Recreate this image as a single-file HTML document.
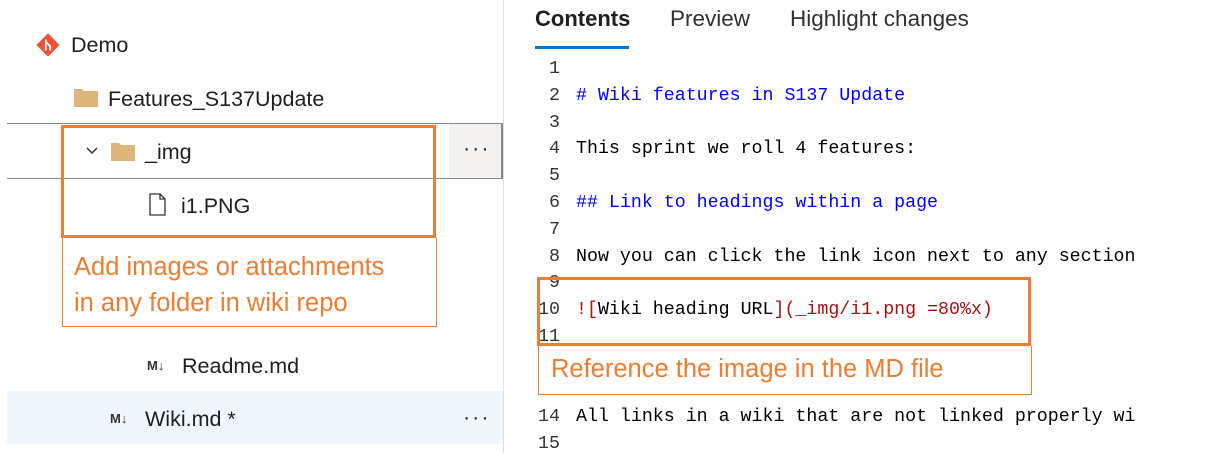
<!DOCTYPE html>
<html><head><meta charset="utf-8"><style>
body{margin:0;width:1228px;height:453px;background:#fff;position:relative;overflow:hidden;font-family:"Liberation Sans",sans-serif;color:#201f1e}
.a{position:absolute;white-space:nowrap}
.t{font-size:21.5px}
.ln{position:absolute;width:60px;text-align:right;left:500px;color:#333;font-family:"Liberation Mono",monospace;font-size:18.3px}
.cl{position:absolute;left:576px;font-family:"Liberation Mono",monospace;font-size:18.3px;white-space:nowrap;color:#000}
.or{color:#ED7D31}
.md{font-size:13px;font-weight:bold;color:#333}
</style></head><body>
<div class="a" style="left:503px;top:0;width:1px;height:453px;background:#e1dfdd"></div>
<svg class="a" style="left:36px;top:33px" width="24" height="24" viewBox="0 0 22 22"><rect x="3.5" y="3.5" width="15" height="15" transform="rotate(45 11 11)" fill="#f05033"/><path d="M9 6v10M9 8l4 4v4" stroke="#fff" stroke-width="1.6" fill="none"/></svg>
<div class="a t" style="left:71px;top:33px">Demo</div>
<svg class="a" style="left:74px;top:87px" width="24" height="20"><path d="M0 2h8l2 2h14v16H0z" fill="#dcb67a"/></svg>
<div class="a t" style="left:108px;top:87px">Features_S137Update</div>
<div class="a" style="left:7px;top:123px;width:494px;height:54px;border-top:1px solid #8a8886;border-bottom:1px solid #8a8886;border-right:2px solid #8a8886"></div>
<div class="a" style="left:449px;top:124px;width:52px;height:53px;background:#f3f2f1"></div>
<div class="a t" style="left:463px;top:136px;letter-spacing:2px">···</div>
<svg class="a" style="left:86px;top:146px" width="12" height="10"><path d="M1 2l5 5 5-5" stroke="#333" stroke-width="1.5" fill="none"/></svg>
<svg class="a" style="left:111px;top:141px" width="24" height="20"><path d="M0 2h8l2 2h14v16H0z" fill="#dcb67a"/></svg>
<div class="a t" style="left:145px;top:140px">_img</div>
<svg class="a" style="left:148px;top:193px" width="20" height="24"><path d="M2 1h10l5 5v16H2z M12 1v5h5" stroke="#333" stroke-width="1.3" fill="none"/></svg>
<div class="a t" style="left:181px;top:194px">i1.PNG</div>
<div class="a" style="left:61px;top:125px;width:369px;height:107px;border:3px solid #ED7D31"></div>
<div class="a" style="left:62px;top:238px;width:373px;height:88px;border:1px solid #ED7D31;border-top:none"></div>
<div class="a or" style="left:74px;top:249px;font-size:25.5px;line-height:36px">Add images or attachments<br>in any folder in wiki repo</div>
<div class="a md" style="left:147px;top:358px">M↓</div>
<div class="a t" style="left:182px;top:354px">Readme.md</div>
<div class="a" style="left:7px;top:391px;width:496px;height:53px;background:#eff6fc"></div>
<div class="a md" style="left:110px;top:411px">M↓</div>
<div class="a t" style="left:145px;top:407px">Wiki.md *</div>
<div class="a t" style="left:463px;top:405px;letter-spacing:2px">···</div>
<div class="a" style="left:535px;top:6px;font-size:22px;font-weight:bold;color:#201f1e">Contents</div>
<div class="a" style="left:670px;top:6px;font-size:22.5px;color:#323130">Preview</div>
<div class="a" style="left:790px;top:6px;font-size:22.5px;color:#323130">Highlight changes</div>
<div class="a" style="left:535px;top:46px;width:94px;height:3px;background:#0078d4"></div>
<div class="ln" style="top:59px">1</div>
<div class="ln" style="top:86px">2</div><div class="cl" style="top:86px;color:#0000ff"># Wiki features in S137 Update</div>
<div class="ln" style="top:113px">3</div>
<div class="ln" style="top:139px">4</div><div class="cl" style="top:139px">This sprint we roll 4 features:</div>
<div class="ln" style="top:166px">5</div>
<div class="ln" style="top:193px">6</div><div class="cl" style="top:193px;color:#0000ff">## Link to headings within a page</div>
<div class="ln" style="top:220px">7</div>
<div class="ln" style="top:247px">8</div><div class="cl" style="top:247px">Now you can click the link icon next to any section</div>
<div class="ln" style="top:273px">9</div>
<div class="ln" style="top:300px">10</div><div class="cl" style="top:300px;color:#a31515">![<span style="color:#000">Wiki heading URL</span>](_img/i1.png =80%x)</div>
<div class="ln" style="top:327px">11</div>
<div class="a" style="left:537px;top:277px;width:488px;height:63px;border:3px solid #ED7D31"></div>
<div class="a" style="left:538px;top:346px;width:492px;height:48px;border:1px solid #ED7D31;border-top:none;background:#fff"></div>
<div class="a or" style="left:551px;top:355px;font-size:25.5px">Reference the image in the MD file</div>
<div class="ln" style="top:407px">14</div><div class="cl" style="top:407px">All links in a wiki that are not linked properly wi</div>
<div class="ln" style="top:434px">15</div>
</body></html>
